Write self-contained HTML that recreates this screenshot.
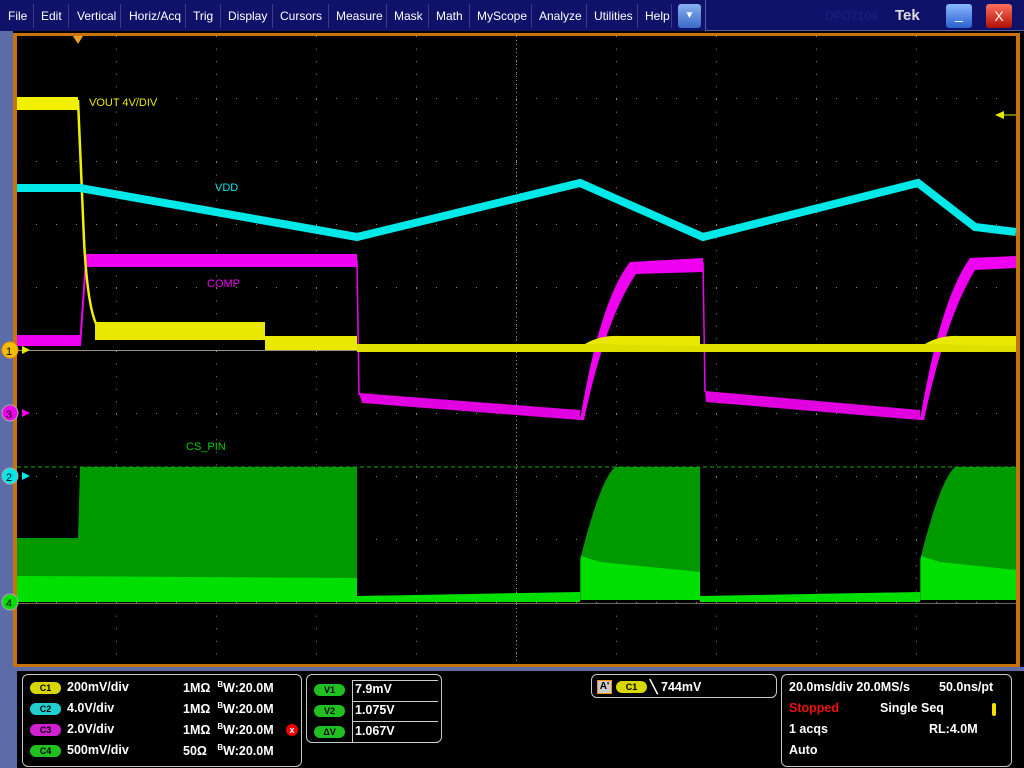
<!DOCTYPE html>
<html><head><meta charset="utf-8"><style>
*{margin:0;padding:0;box-sizing:border-box}
body{width:1024px;height:768px;background:#000;position:relative;overflow:hidden;font-family:"Liberation Sans",sans-serif}
#menu{position:absolute;left:0;top:0;width:1024px;height:31px;background:#10126a;color:#fff;font-size:12px}
#menu span{position:absolute;top:9px}
.sep{position:absolute;top:4px;width:1px;height:24px;background:#3a3e8a}
#strip{position:absolute;left:0;top:31px;width:13px;height:737px;background:#5b6ca8}
#frame{position:absolute;left:13px;top:33px;width:1007px;height:634px;background:#c8740e}
#bb{position:absolute;left:0;top:667px;width:1024px;height:4px;background:#5b6ca8}
.box{position:absolute;border:1px solid #c8c8c8;border-radius:6px}
.t{position:absolute;color:#fff;font-size:12.5px;font-weight:bold;white-space:nowrap}
.pill{position:absolute;width:31px;height:12px;border-radius:6px;font-size:9px;font-weight:bold;color:#000;text-align:center;line-height:12px}
</style></head><body>
<div id="menu">
<span style="left:8px">File</span><div class="sep" style="left:33px"></div>
<span style="left:41px">Edit</span><div class="sep" style="left:68px"></div>
<span style="left:77px">Vertical</span><div class="sep" style="left:120px"></div>
<span style="left:129px">Horiz/Acq</span><div class="sep" style="left:185px"></div>
<span style="left:193px">Trig</span><div class="sep" style="left:220px"></div>
<span style="left:228px">Display</span><div class="sep" style="left:272px"></div>
<span style="left:280px">Cursors</span><div class="sep" style="left:328px"></div>
<span style="left:336px">Measure</span><div class="sep" style="left:386px"></div>
<span style="left:394px">Mask</span><div class="sep" style="left:428px"></div>
<span style="left:436px">Math</span><div class="sep" style="left:469px"></div>
<span style="left:477px">MyScope</span><div class="sep" style="left:531px"></div>
<span style="left:539px">Analyze</span><div class="sep" style="left:586px"></div>
<span style="left:594px">Utilities</span><div class="sep" style="left:637px"></div>
<span style="left:645px">Help</span><div class="sep" style="left:671px"></div>
<div style="position:absolute;left:678px;top:4px;width:23px;height:24px;background:linear-gradient(#8ab0f0,#3a68c8);border-radius:3px;color:#fff;font-size:10px;text-align:center;line-height:24px">▼</div>
<div style="position:absolute;left:705px;top:0;width:319px;height:31px;border-left:1px solid #5060a0;border-bottom:1px solid #5060a0"></div>
<span style="left:825px;color:#1c2080;font-size:12px">DPO7104</span>
<span style="left:895px;top:7px;font-weight:bold;font-size:15px;color:#ddd">Tek</span>
<div style="position:absolute;left:946px;top:4px;width:26px;height:24px;background:linear-gradient(#8ab8ff,#2a60d0);border-radius:3px;color:#fff;text-align:center;font-size:14px;line-height:20px">_</div>
<div style="position:absolute;left:986px;top:4px;width:26px;height:24px;background:linear-gradient(#ff7060,#b01000);border-radius:3px;color:#fff;text-align:center;font-size:14px;line-height:24px">X</div>
</div>
<div id="strip"></div>
<div id="frame"></div>
<svg style="position:absolute;left:0;top:0" width="1024" height="768">
<rect x="17" y="36" width="999" height="628" fill="#000"/>
<g stroke="#8a8270" stroke-width="1" stroke-dasharray="1 11.6">
<line x1="116.5" y1="36" x2="116.5" y2="664"/><line x1="216.5" y1="36" x2="216.5" y2="664"/><line x1="316.5" y1="36" x2="316.5" y2="664"/><line x1="416.5" y1="36" x2="416.5" y2="664"/><line x1="616.5" y1="36" x2="616.5" y2="664"/><line x1="716.5" y1="36" x2="716.5" y2="664"/><line x1="816.5" y1="36" x2="816.5" y2="664"/><line x1="916.5" y1="36" x2="916.5" y2="664"/><line x1="516.5" y1="36" x2="516.5" y2="664"/>
</g>
<g stroke="#8a8270" stroke-width="1" stroke-dasharray="1 19">
<line x1="16" y1="98.5" x2="1016" y2="98.5"/><line x1="16" y1="161.5" x2="1016" y2="161.5"/><line x1="16" y1="224.5" x2="1016" y2="224.5"/><line x1="16" y1="287.5" x2="1016" y2="287.5"/><line x1="16" y1="413.5" x2="1016" y2="413.5"/><line x1="16" y1="476.5" x2="1016" y2="476.5"/><line x1="16" y1="539.5" x2="1016" y2="539.5"/><line x1="16" y1="602.5" x2="1016" y2="602.5"/>
</g>
<!-- green -->
<path d="M17 538 L78 538 L80 467 L357 467 L357 600 L17 600Z" fill="#009a00"/>
<path d="M580 560 Q600 480 615 467 L700 467 L700 600 L580 600Z" fill="#009a00"/>
<path d="M920 560 Q940 480 955 467 L1016 467 L1016 600 L920 600Z" fill="#009a00"/>
<path d="M17 576 L357 578 L357 602 L17 602Z" fill="#00e000"/>
<path d="M581 556 L600 562 L700 572 L700 600 L581 600Z" fill="#00e000"/>
<path d="M921 556 L940 562 L1016 570 L1016 600 L921 600Z" fill="#00e000"/>
<path d="M357 596 L580 592 L580 602 L357 602Z" fill="#00e000"/>
<path d="M700 596 L920 592 L920 602 L700 602Z" fill="#00e000"/>
<line x1="17" y1="603.5" x2="1016" y2="603.5" stroke="#6a6a5a"/>
<line x1="17" y1="467" x2="1016" y2="467" stroke="#00b000" stroke-dasharray="4 3"/>
<line x1="17" y1="350.5" x2="1016" y2="350.5" stroke="#9a9280"/>
<line x1="516.5" y1="36" x2="516.5" y2="664" stroke="#9a9280" stroke-dasharray="1 3"/>
<!-- magenta -->
<rect x="17" y="335" width="63" height="11" fill="#f000f0"/>
<path d="M80 346 L86 260" stroke="#f000f0" stroke-width="2" fill="none"/>
<rect x="86" y="254" width="271" height="13" fill="#f000f0"/>
<line x1="357" y1="260" x2="359" y2="395" stroke="#f000f0" stroke-width="1.5"/>
<path d="M359 393 L580 410 L580 420 L362 403Z" fill="#e000e0"/>
<path d="M580 420 Q600 300 630 262 L703 258 L703 272 L636 274 Q605 320 584 420Z" fill="#f000f0"/>
<line x1="703" y1="262" x2="705" y2="392" stroke="#f000f0" stroke-width="1.5"/>
<path d="M705 391 L920 410 L920 420 L706 402Z" fill="#e000e0"/>
<path d="M920 420 Q940 300 970 258 L1016 256 L1016 268 L975 270 Q945 320 924 420Z" fill="#f000f0"/>
<!-- yellow -->
<rect x="17" y="97" width="61" height="13" fill="#f0f000"/>
<path d="M78 100 L84 240 Q88 318 100 330" stroke="#f0f000" stroke-width="2.5" fill="none"/>
<rect x="95" y="322" width="170" height="18" fill="#e8e800"/>
<rect x="265" y="336" width="92" height="14" fill="#e8e800"/>
<rect x="357" y="344" width="659" height="8" fill="#e0e000"/>
<path d="M585 344 Q600 335 620 336 L700 336 L700 346Z" fill="#e8e800"/>
<path d="M925 344 Q940 335 960 336 L1016 336 L1016 346Z" fill="#e8e800"/>
<!-- cyan -->
<polyline points="17,188 80,188 357,237 580,183 703,237 918,183 975,227 1016,232" fill="none" stroke="#00e8e8" stroke-width="8"/>
<text x="89" y="106" fill="#e8e800" font-size="11" font-family="Liberation Sans">VOUT 4V/DIV</text>
<text x="215" y="191" fill="#00e8e8" font-size="11" font-family="Liberation Sans">VDD</text>
<text x="207" y="287" fill="#f000f0" font-size="11" font-family="Liberation Sans">COMP</text>
<text x="186" y="450" fill="#00d000" font-size="11" font-family="Liberation Sans">CS_PIN</text>
<polygon points="73,36 83,36 78,44" fill="#f0a020"/>
<polygon points="995,115 1004,111 1004,119" fill="#e8e800"/><line x1="1004" y1="115" x2="1016" y2="115" stroke="#e8e800"/>
<circle cx="10" cy="350" r="8" fill="#f0c000" stroke="#f09000"/><text x="6" y="355" font-size="11" font-family="Liberation Sans">1</text><polygon points="22,346 30,350 22,354" fill="#e8e800"/>
<circle cx="10" cy="413" r="8" fill="#f000f0" stroke="#aaa"/><text x="6" y="418" font-size="11" font-family="Liberation Sans">3</text><polygon points="22,409 30,413 22,417" fill="#f000f0"/>
<circle cx="10" cy="476" r="8" fill="#00e8e8" stroke="#aaa"/><text x="6" y="481" font-size="11" font-family="Liberation Sans">2</text><polygon points="22,472 30,476 22,480" fill="#00e8e8"/>
<circle cx="10" cy="602" r="8" fill="#00e000" stroke="#aaa"/><text x="6" y="607" font-size="11" font-family="Liberation Sans">4</text>
</svg>
<div id="bb"></div>
<div style="position:absolute;left:13px;top:671px;width:4px;height:97px;background:#5b6ca8"></div>
<div class="box" style="left:22px;top:674px;width:280px;height:93px"></div>
<div class="pill" style="left:30px;top:682px;background:#d8d800">C1</div>
<div class="pill" style="left:30px;top:703px;background:#20d0d0">C2</div>
<div class="pill" style="left:30px;top:724px;background:#d020d0">C3</div>
<div class="pill" style="left:30px;top:745px;background:#20c020">C4</div>
<div class="t" style="left:67px;top:680px">200mV/div</div>
<div class="t" style="left:67px;top:701px">4.0V/div</div>
<div class="t" style="left:67px;top:722px">2.0V/div</div>
<div class="t" style="left:67px;top:743px">500mV/div</div>
<div class="t" style="left:183px;top:680px">1MΩ &nbsp;<sup style="font-size:8px">B</sup>W:20.0M</div>
<div class="t" style="left:183px;top:701px">1MΩ &nbsp;<sup style="font-size:8px">B</sup>W:20.0M</div>
<div class="t" style="left:183px;top:722px">1MΩ &nbsp;<sup style="font-size:8px">B</sup>W:20.0M</div>
<div class="t" style="left:183px;top:743px">50Ω &nbsp;&nbsp;<sup style="font-size:8px">B</sup>W:20.0M</div>
<div style="position:absolute;left:286px;top:724px;width:12px;height:12px;border-radius:6px;background:#e00;color:#fff;font-size:9px;text-align:center;line-height:12px;font-weight:bold">x</div>
<div class="box" style="left:306px;top:674px;width:136px;height:69px"></div>
<div style="position:absolute;left:352px;top:680px;width:86px;height:63px;border:1px solid #ccc;border-right:0"></div>
<div style="position:absolute;left:352px;top:701px;width:86px;height:21px;border-top:1px solid #ccc;border-bottom:1px solid #ccc"></div>
<div class="pill" style="left:314px;top:684px;background:#20c020">V1</div>
<div class="pill" style="left:314px;top:705px;background:#20c020">V2</div>
<div class="pill" style="left:314px;top:726px;background:#20c020">ΔV</div>
<div class="t" style="left:355px;top:682px">7.9mV</div>
<div class="t" style="left:355px;top:703px">1.075V</div>
<div class="t" style="left:355px;top:724px">1.067V</div>
<div class="box" style="left:591px;top:674px;width:186px;height:24px"></div>
<div style="position:absolute;left:597px;top:680px;width:15px;height:14px;background:#ccc;border:1px solid #f09000;font-size:10px;font-weight:bold;text-align:center">A'</div>
<div class="pill" style="left:616px;top:681px;background:#d8d800">C1</div>
<div class="t" style="left:650px;top:679px">╲ 744mV</div>
<div class="box" style="left:781px;top:674px;width:231px;height:93px"></div>
<div class="t" style="left:789px;top:680px">20.0ms/div 20.0MS/s</div>
<div class="t" style="left:939px;top:680px">50.0ns/pt</div>
<div class="t" style="left:789px;top:701px;color:#f01010">Stopped</div>
<div class="t" style="left:880px;top:701px">Single Seq</div>
<div style="position:absolute;left:992px;top:703px;width:4px;height:13px;background:#f0e000;border-radius:2px"></div>
<div class="t" style="left:789px;top:722px">1 acqs</div>
<div class="t" style="left:929px;top:722px">RL:4.0M</div>
<div class="t" style="left:789px;top:743px">Auto</div>
</body></html>
